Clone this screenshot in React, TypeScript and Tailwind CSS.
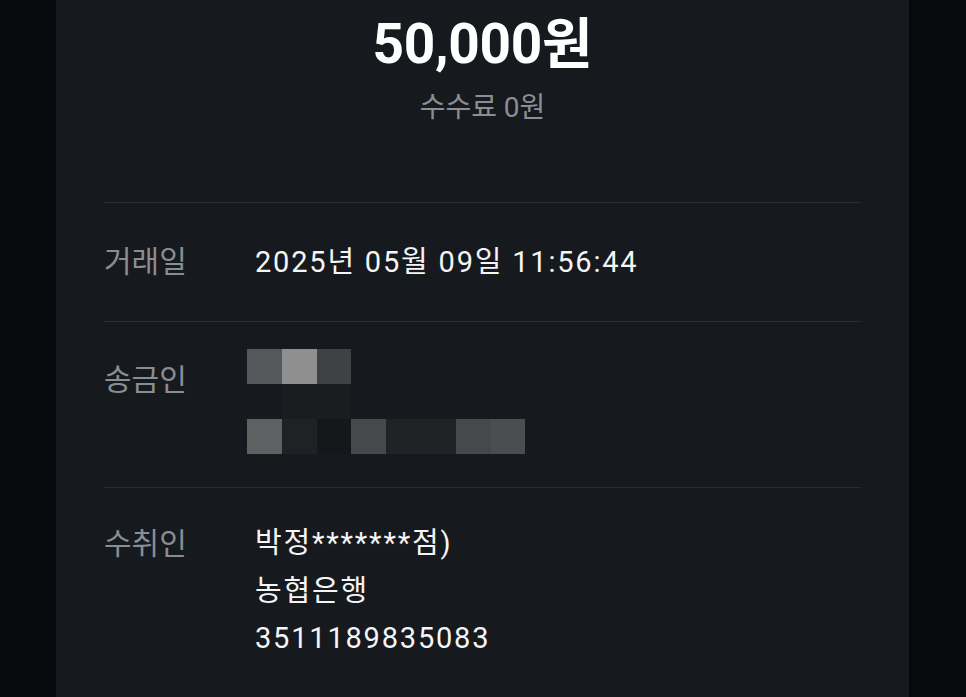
const FONT = { fontFamily: "Roboto, 'Noto Sans CJK KR', sans-serif" };

// pixelated (mosaic) sender name + account, one entry per 35px tile
const mosaic: string[][] = [
    ["#55585b", "#8f8f90", "#3f4245"],
    ["#16191d", "#1a1d20", "#1a1d20"],
    ["#5e6162", "#1f2225", "#15181b", "#46494c", "#202326", "#202326", "#46494c", "#4b4e51"],
];

function Mosaic() {
    return (
        <div className="flex flex-col -ml-[8px]">
            {mosaic.map((row, i) => (
                <div key={i} className="flex h-[35px]">
                    {row.map((c, j) => (
                        <div key={j} className="w-[34.8px] h-full" style={{ backgroundColor: c }} />
                    ))}
                </div>
            ))}
        </div>
    );
}

function Label({ children }: { children: React.ReactNode }) {
    return (
        <div className="w-[151px] shrink-0 text-[30px] leading-[40px] text-[#8a8d91]">
            {children}
        </div>
    );
}

export default function App() {
    return (
        <div className="min-h-[697px] h-[697px] overflow-hidden bg-[#07090c]" style={FONT}>
            <div className="ml-[56px] w-[853px] h-full bg-[#16191d] px-[48px]">
                <div className="h-[202px] flex flex-col items-center">
                    <div className="mt-[11px] text-[55px] leading-[66px] font-bold text-white tracking-[-0.3px]">
                        50,000원
                    </div>
                    <div className="mt-[13px] text-[28px] leading-[36px] text-[#8b8e92]">
                        수수료 0원
                    </div>
                </div>

                <div className="flex border-t border-[#2a2d31] py-[39px]">
                    <Label>거래일</Label>
                    <div className="text-[29px] leading-[40px] text-[#f5f5f5] tracking-[1.8px]">
                        2025년 05월 09일 11:56:44
                    </div>
                </div>

                <div className="flex border-t border-[#2a2d31] pt-[27px] pb-[33px]">
                    <div className="mt-[11px]">
                        <Label>송금인</Label>
                    </div>
                    <Mosaic />
                </div>

                <div className="flex border-t border-[#2a2d31] pt-[32px]">
                    <div className="mt-[4px]">
                        <Label>수취인</Label>
                    </div>
                    <div className="flex flex-col text-[29px] leading-[47.5px] text-[#f5f5f5] tracking-[1.8px]">
                        <span>박정*******점)</span>
                        <span>농협은행</span>
                        <span>3511189835083</span>
                    </div>
                </div>
            </div>
        </div>
    );
}
